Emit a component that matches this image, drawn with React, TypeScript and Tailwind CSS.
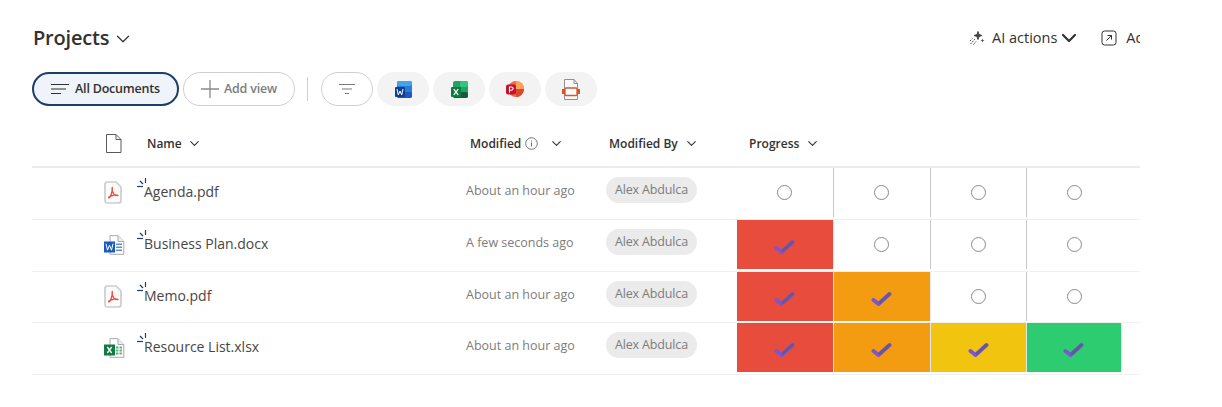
import React from "react";
import { ChevronDown } from "lucide-react";

const font = "font-['Open_Sans','Noto_Sans',sans-serif]";

function Pdf() {
  return (
    <svg width="18" height="23" viewBox="0 0 18 23" fill="none">
      <path d="M3 1H12L17 6V19.500a2.500 2.500 0 0 1-2.500 2.500H3.500A2.500 2.500 0 0 1 1 19.500V3a2 2 0 0 1 2-2Z" fill="#fdfafa" stroke="#cdcdcd" strokeWidth="1.700" />
      <path d="M8.300 6.500c-.6 2.500.3 5 1.700 6.600 1.100 1.100 2.900 1.800 4 1.400-1.800-1-6-.4-9 1.500-.8.6-.3 1.200.4.700 1.500-1 2.900-6 2.900-10.200Z" stroke="#ea4a41" strokeWidth="1.300" fill="none" strokeLinejoin="round" />
    </svg>
  );
}
function WordFile() {
  return (
    <svg width="21" height="20" viewBox="0 0 21 20" fill="none">
      <path d="M6 .7H14L19.800 6.500V19.300H6Z" fill="#fff" stroke="#a8a8a8" />
      <path d="M14 .7V6.500H19.800" fill="#eee" stroke="#a8a8a8" />
      <rect x="12" y="8.500" width="6" height="1.500" fill="#5b8fd6" />
      <rect x="12" y="11.500" width="6" height="1.500" fill="#5b8fd6" />
      <rect x="12" y="14.500" width="6" height="1.500" fill="#5b8fd6" />
      <rect x="0" y="6.500" width="11" height="11" fill="#185abd" />
      <path d="M2 8.700l1.500 6.500 2-5 2 5L9 8.700" stroke="#fff" strokeWidth="1" fill="none" />
    </svg>
  );
}
function ExcelFile() {
  return (
    <svg width="21" height="20" viewBox="0 0 21 20" fill="none">
      <path d="M6 .7H14L19.800 6.500V19.300H6Z" fill="#fff" stroke="#a8a8a8" />
      <path d="M14 .7V6.500H19.800" fill="#eee" stroke="#a8a8a8" />
      <rect x="12" y="8.500" width="2.500" height="2" fill="#5fae84" />
      <rect x="15.500" y="8.500" width="2.500" height="2" fill="#5fae84" />
      <rect x="12" y="11.500" width="2.500" height="2" fill="#5fae84" />
      <rect x="15.500" y="11.500" width="2.500" height="2" fill="#5fae84" />
      <rect x="12" y="14.500" width="2.500" height="2" fill="#5fae84" />
      <rect x="15.500" y="14.500" width="2.500" height="2" fill="#5fae84" />
      <rect x="0" y="6.500" width="11" height="11" fill="#107c41" />
      <path d="M3.300 9l4.400 6M7.700 9l-4.400 6" stroke="#fff" strokeWidth="1.300" />
    </svg>
  );
}
function Sparkle() {
  return (
    <svg width="10" height="10" viewBox="0 0 10 10" className="absolute -left-[7px] -top-[3px]" fill="none" stroke="#1d3f73" strokeWidth="1.200">
      <path d="M8.500 0V5" />
      <path d="M3 3L6 6" />
      <path d="M0 8.500H6" />
    </svg>
  );
}
function Check() {
  return (
    <svg width="21" height="16" viewBox="0 0 21 16" fill="none" className="mt-[5px] mr-[1px]">
      <path d="M2.500 9L7.500 13L18.500 3" stroke="#7d55cf" strokeWidth="4" strokeLinecap="round" strokeLinejoin="round" />
      <path d="M9 11.500L18.500 3" stroke="#64569f" strokeWidth="3" strokeLinecap="round" />
    </svg>
  );
}
function Cell({ color, last }: { color?: string; last?: boolean }) {
  if (color) {
    return (
      <div className={`h-full flex items-center justify-center border-r border-[#e8e8e8] ${color}`}>
        <Check />
      </div>
    );
  }
  return (
    <div className={`h-full flex items-center justify-center ${last ? "" : "border-r border-[#c8c8c8]"}`}>
      <div className={`w-[15px] h-[15px] rounded-full border-[1.5px] border-[#8a8a8a] ${last ? "" : "mr-[1px]"}`} />
    </div>
  );
}

const RED = "bg-[#e74c3c]";
const ORANGE = "bg-[#f39c12]";
const YELLOW = "bg-[#f1c40f]";
const GREEN = "bg-[#2ecc71]";

const rows = [
  { icon: <Pdf />, name: "Agenda.pdf", mod: "About an hour ago", cells: [] as string[], h: "h-[52px]" },
  { icon: <WordFile />, name: "Business Plan.docx", mod: "A few seconds ago", cells: [RED], h: "h-[52px]" },
  { icon: <Pdf />, name: "Memo.pdf", mod: "About an hour ago", cells: [RED, ORANGE], h: "h-[51px]" },
  { icon: <ExcelFile />, name: "Resource List.xlsx", mod: "About an hour ago", cells: [RED, ORANGE, YELLOW, GREEN], h: "h-[52px]" },
];

const cols = "grid grid-cols-[72px_362px_140px_131px_97px_97px_96px_95px_18px]";

function Pill({ children }: { children: React.ReactNode }) {
  return <div className="w-[52px] h-[34px] rounded-full bg-[#f3f3f3] flex items-center justify-center">{children}</div>;
}

export default function App() {
  return (
    <div className={`${font} w-[1222px] h-[407px] bg-white pl-[32px] pt-[20px] text-[#323130]`}>
      <div className="w-[1108px] overflow-hidden">
        <div className="flex items-center justify-between h-[36px]">
          <div className="flex items-center pl-[1px]">
            <span className="text-[20px] font-semibold tracking-[-0.2px]">Projects</span>
            <ChevronDown size={22} strokeWidth={1.3} className="ml-[3px] mt-[1px]" />
          </div>
          <div className="flex items-center whitespace-nowrap text-[14.500px] w-[171px] overflow-hidden">
            <svg width="16" height="16" viewBox="0 0 16 16" fill="none" className="shrink-0 mr-[7px]" stroke="#444">
              <path d="M9 1.500l1 3 3 1-3 1-1 3-1-3-3-1 3-1Z" fill="#444" />
              <path d="M13.500 8.500l.5 1.500 1.500.5-1.500.5-.5 1.500-.5-1.500-1.500-.5 1.500-.5Z" fill="#444" stroke="none" />
              <path d="M1.500 14L6 9M4.500 14.500L7 11.500M1 11L3.500 8.500" strokeDasharray="1.500 1" />
            </svg>
            <span>AI actions</span>
            <ChevronDown size={24} strokeWidth={2.2} className="shrink-0" />
            <svg width="16" height="16" viewBox="0 0 16 16" fill="none" stroke="#323130" className="shrink-0 ml-[20px] mr-[9px]">
              <rect x="1" y="1" width="14" height="14" rx="2.500" />
              <path d="M5.500 10.500L10.500 5.500M6.500 5.500H10.500V9.500" />
            </svg>
            <span>Add</span>
          </div>
        </div>

        <div className="flex items-center mt-[16px] h-[34px]">
          <div className="w-[147px] h-[34px] rounded-full border-2 border-[#1c3d6e] bg-[#eff3fa] flex items-center justify-center gap-[6px]">
            <svg width="18" height="12" viewBox="0 0 18 12" stroke="#323130" strokeWidth="1.200">
              <path d="M0 1.500H18M0 6H15M0 10.500H10" />
            </svg>
            <span className="text-[12.500px] font-semibold tracking-[-0.2px] mt-[1px]">All Documents</span>
          </div>
          <div className="ml-[4px] w-[112px] h-[34px] rounded-full border border-[#cfcfcf] flex items-center justify-center gap-[5px] text-[#7d7d7d]">
            <svg width="18" height="18" viewBox="0 0 18 18" stroke="#8a8a8a" strokeWidth="1.300">
              <path d="M9 0V18M0 9H18" />
            </svg>
            <span className="text-[12.500px] font-semibold tracking-[-0.2px] mt-[1px]">Add view</span>
          </div>
          <div className="ml-[12px] w-px h-[24px] bg-[#d0d0d0]" />
          <div className="ml-[13px] w-[52px] h-[34px] rounded-full border border-[#cfcfcf] flex items-center justify-center">
            <svg width="16" height="10" viewBox="0 0 16 10" stroke="#7a7a7a">
              <path d="M0 .5H16M3 5H13M6 9.500H10" />
            </svg>
          </div>
          <div className="ml-[4px] flex gap-[4px]">
            <Pill>
              <svg width="17" height="17" viewBox="0 0 17 17">
                <rect x="2" y="0" width="15" height="17" rx="2" fill="#2b7cd3" />
                <rect x="2" y="0" width="15" height="5" rx="2" fill="#41a5ee" />
                <rect x="2" y="11" width="15" height="6" rx="2" fill="#185abd" />
                <rect x="0" y="6" width="10" height="10" rx="1" fill="#103f91" />
                <path d="M2 8l1.300 6 1.700-4 1.700 4L8 8" stroke="#fff" strokeWidth="1" fill="none" />
              </svg>
            </Pill>
            <Pill>
              <svg width="17" height="17" viewBox="0 0 17 17">
                <rect x="2" y="0" width="15" height="17" rx="2" fill="#21a366" />
                <rect x="9" y="0" width="8" height="6" rx="2" fill="#33c481" />
                <rect x="2" y="11" width="15" height="6" rx="2" fill="#185c37" />
                <rect x="0" y="6" width="10" height="10" rx="1" fill="#107c41" />
                <path d="M2.800 8.200l4.400 5.600M7.200 8.200l-4.400 5.600" stroke="#fff" strokeWidth="1.200" />
              </svg>
            </Pill>
            <Pill>
              <svg width="18" height="18" viewBox="0 0 18 18">
                <circle cx="10" cy="9" r="8" fill="#ed6c47" />
                <path d="M10 1a8 8 0 0 1 8 8h-8Z" fill="#ffa25e" />
                <path d="M10 9h8a8 8 0 0 1-8 8Z" fill="#d9482f" />
                <rect x="0" y="4.500" width="10" height="10" rx="2" fill="#c4122f" />
                <path d="M3.500 12.500V7H5.500a1.500 1.500 0 0 1 0 3.200H3.500" stroke="#fff" strokeWidth="1.100" fill="none" />
              </svg>
            </Pill>
            <Pill>
              <svg width="18" height="21" viewBox="0 0 18 21" fill="none">
                <path d="M2.500 .5H12L15.500 4.500V20.500H2.500Z" stroke="#8f8f8f" fill="#fafafa" />
                <path d="M12 .5V4.500H15.500" stroke="#8f8f8f" />
                <rect x="3" y="9" width="12" height="7.500" stroke="#d9532c" strokeWidth="1.300" rx="1" fill="#fff" />
                <rect x="0" y="10" width="3" height="5" fill="#d9532c" />
                <rect x="15" y="10" width="3" height="5" fill="#d9532c" />
              </svg>
            </Pill>
          </div>
        </div>

        <div className={`${cols} mt-[17px] h-[45px] pb-[2px] items-center border-b-2 border-[#ebebeb] text-[12px] font-semibold`}>
          <div className="pl-[73px] overflow-visible">
            <svg width="17" height="19" viewBox="0 0 17 19" fill="none" stroke="#5a5a5a">
              <path d="M1.500 .5H11L16 5.500V18.500H1.500Z" strokeLinejoin="round" />
              <path d="M11 .5V5.500H16" />
            </svg>
          </div>
          <div className="pl-[43px] flex items-center gap-[5px]">
            <span>Name</span>
            <ChevronDown size={15} strokeWidth={1.7} />
          </div>
          <div className="pl-[4px] flex items-center">
            Modified
            <svg width="13" height="13" viewBox="0 0 13 13" fill="none" stroke="#666" className="ml-[4px]">
              <circle cx="6.500" cy="6.500" r="5.800" strokeWidth="0.900" />
              <path d="M6.500 5.500V9.500M6.500 3.500V4.500" />
            </svg>
            <ChevronDown size={15} strokeWidth={1.7} className="ml-[11px]" />
          </div>
          <div className="pl-[3px] flex items-center gap-[6px]">
            Modified By
            <ChevronDown size={15} strokeWidth={1.7} />
          </div>
          <div className="pl-[12px] col-span-5 flex items-center gap-[6px]">
            Progress
            <ChevronDown size={15} strokeWidth={1.7} />
          </div>
        </div>

        {rows.map((r) => (
          <div key={r.name} className={`${cols} ${r.h} border-b border-[#f0f0f0]`}>
            <div className="pl-[72px] flex items-center w-[105px] pb-[2px]">{r.icon}</div>
            <div className="pl-[40px] flex items-center text-[14px] text-[#484644] pb-[4px]">
              <span className="relative">
                <Sparkle />
                {r.name}
              </span>
            </div>
            <div className="flex items-center text-[12.500px] text-[#7c7c7c] pb-[4px]">{r.mod}</div>
            <div>
              <div className="mt-[9px] w-[91px] h-[26px] rounded-full bg-[#ebebeb] flex items-center justify-center pt-[1px] text-[12.500px] tracking-[-0.15px] text-[#7c7c7c]">
                Alex Abdulca
              </div>
            </div>
            {[0, 1, 2, 3].map((i) => (
              <div key={i} className="h-[49px]">
                <Cell color={r.cells[i]} last={i === 3} />
              </div>
            ))}
            <div />
          </div>
        ))}
      </div>
    </div>
  );
}
